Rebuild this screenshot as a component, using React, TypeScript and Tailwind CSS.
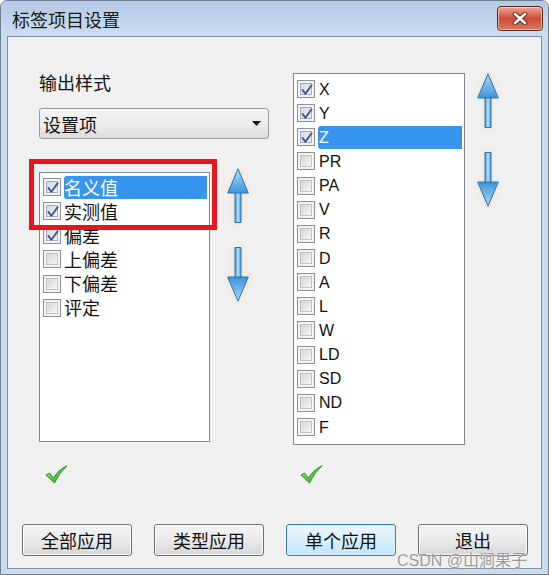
import React from "react";

function Box({ checked }: { checked: boolean }) {
  return (
    <div className="w-[18px] h-[18px] shrink-0 border border-[#8e8f8f] bg-[#f4f4f4] p-[2px]">
      <div
        className={
          checked
            ? "relative w-full h-full border border-[#a6afc0] bg-gradient-to-br from-[#cfd6e6] to-[#f3f5f9]"
            : "relative w-full h-full border border-[#c2c2c2] bg-gradient-to-br from-[#d6d6d6] to-[#f6f6f6]"
        }
      >
        {checked && (
          <svg className="absolute left-[-1px] top-[-1px]" width="14" height="14" viewBox="0 0 14 14">
            <path d="M2.5 7 L5.5 10.8 L11.5 2.2" fill="none" stroke="#44588f" strokeWidth="2" strokeLinecap="round" strokeLinejoin="round" />
          </svg>
        )}
      </div>
    </div>
  );
}

function Arrow({ down }: { down?: boolean }) {
  const id = down ? "gdn" : "gup";
  return (
    <svg
      width="22"
      height="55"
      viewBox="0 0 22 55"
      className="drop-shadow-[0_0_3px_rgba(255,200,140,0.45)]"
      style={down ? { transform: "scaleY(-1)" } : undefined}
    >
      <defs>
        <linearGradient id={id + "h"} x1="0" y1="0" x2="0" y2="1">
          <stop offset="0" stopColor="#a9dcf8" />
          <stop offset="1" stopColor="#3b93dc" />
        </linearGradient>
        <linearGradient id={id + "s"} x1="0" y1="0" x2="1" y2="0">
          <stop offset="0" stopColor="#3e97dd" />
          <stop offset="0.5" stopColor="#b9e2f8" />
          <stop offset="1" stopColor="#3e97dd" />
        </linearGradient>
      </defs>
      <path d="M8 24 L14 24 L14 54.5 L8 54.5 Z" fill={`url(#${id}s)`} stroke="#2a74b4" strokeWidth="1" />
      <path d="M11 0.8 L21.3 25 L0.7 25 Z" fill={`url(#${id}h)`} stroke="#2a74b4" strokeWidth="1" strokeLinejoin="round" />
    </svg>
  );
}

function GreenCheck() {
  return (
    <svg width="23" height="19" viewBox="0 0 23 19">
      <defs>
        <linearGradient id="gck" x1="0" y1="0" x2="1" y2="1">
          <stop offset="0" stopColor="#a8ee72" />
          <stop offset="1" stopColor="#13a01a" />
        </linearGradient>
      </defs>
      <path d="M1 10 L4.5 8 L8.5 13 Q13 5 22 0.8 Q14.5 7.5 9.5 18 Z" fill="url(#gck)" stroke="#1f7a1f" strokeWidth="0.8" strokeLinejoin="round" />
    </svg>
  );
}

function Row({ label, checked, selected, latin }: { label: string; checked: boolean; selected?: boolean; latin?: boolean }) {
  return (
    <div className="h-[24.15px] flex items-center">
      <Box checked={checked} />
      <div
        className={
          selected
            ? "ml-[3px] mr-[2px] flex-1 h-[23px] flex items-center bg-[#3795f0] rounded-l-[3px] text-white"
            : "ml-[3px] flex-1 h-[23px] flex items-center text-[#111]"
        }
      >
        <span
          className={
            latin
              ? "font-['Liberation_Sans','Noto_Sans_CJK_SC',sans-serif] text-[16px] leading-[23px] pl-[1px]"
              : "font-['Noto_Sans_CJK_SC','Noto_Sans',sans-serif] text-[18px] leading-[23px]"
          }
        >
          {label}
        </span>
      </div>
    </div>
  );
}

function Btn({ label, focused }: { label: string; focused?: boolean }) {
  return (
    <div
      className={
        focused
          ? "w-[110px] h-[32px] rounded-[3px] border border-[#3c7fb1] bg-gradient-to-b from-[#eaf6fd] via-[#d9f0fc] to-[#bee6fd] shadow-[inset_0_0_0_1px_#d6eefb] flex items-center justify-center"
          : "w-[110px] h-[32px] rounded-[3px] border border-[#707070] bg-gradient-to-b from-[#f3f3f3] via-[#ebebeb] to-[#d6d6d6] shadow-[inset_0_0_0_1px_#fafafa] flex items-center justify-center"
      }
    >
      <span className="font-['Noto_Sans_CJK_SC','Noto_Sans',sans-serif] text-[18px] leading-[24px] text-[#111]">{label}</span>
    </div>
  );
}

export default function App() {
  const left = [
    { l: "名义值", c: true, s: true },
    { l: "实测值", c: true },
    { l: "偏差", c: true },
    { l: "上偏差", c: false },
    { l: "下偏差", c: false },
    { l: "评定", c: false },
  ];
  const right = [
    { l: "X", c: true },
    { l: "Y", c: true },
    { l: "Z", c: true, s: true },
    { l: "PR", c: false },
    { l: "PA", c: false },
    { l: "V", c: false },
    { l: "R", c: false },
    { l: "D", c: false },
    { l: "A", c: false },
    { l: "L", c: false },
    { l: "W", c: false },
    { l: "LD", c: false },
    { l: "SD", c: false },
    { l: "ND", c: false },
    { l: "F", c: false },
  ];
  return (
    <div className="relative w-[549px] h-[575px] bg-white">
      <div className="w-[549px] h-[575px] border border-[#6c7d90] rounded-t-[7px] bg-[#c9dcef] flex flex-col overflow-hidden">
        {/* title bar */}
        <div className="h-[35px] shrink-0 bg-gradient-to-b from-[#b4cbe5] to-[#cbdcee] flex items-start justify-between pl-[11px] pr-[5px]">
          <span className="mt-[5px] font-['Noto_Sans_CJK_SC','Noto_Sans',sans-serif] text-[18px] leading-[26px] text-[#1a1a1a]">标签项目设置</span>
          <div className="mt-[5px] w-[46px] h-[25px] rounded-[4px] border border-[#5e2a22] bg-gradient-to-b from-[#e9a899] via-[#cf4d36] to-[#d9795f] shadow-[inset_0_0_0_1px_rgba(255,220,210,0.6)] flex items-center justify-center">
            <svg width="16" height="13" viewBox="0 0 16 13">
              <path d="M3 2 L13 11 M13 2 L3 11" stroke="#5a2018" strokeWidth="4.6" strokeLinecap="round" />
              <path d="M3 2 L13 11 M13 2 L3 11" stroke="#ffffff" strokeWidth="2.8" strokeLinecap="round" />
            </svg>
          </div>
        </div>
        {/* client */}
        <div className="mx-[6px] h-[533px] shrink-0 border border-[#7f8fa3] bg-[#f0f0f0] flex flex-col">
          <div className="flex pt-[33px] pl-[31px]">
            {/* left column */}
            <div className="flex flex-col w-[230px]">
              <div className="h-[24px] font-['Noto_Sans_CJK_SC','Noto_Sans',sans-serif] text-[18px] leading-[24px] text-[#111]">输出样式</div>
              <div className="mt-[14px] h-[31px] rounded-[3px] border border-[#9a9a9a] bg-gradient-to-b from-[#f4f4f4] via-[#ececec] to-[#dcdcdc] flex items-center justify-between pl-[3px] pr-[7px]">
                <span className="font-['Noto_Sans_CJK_SC','Noto_Sans',sans-serif] text-[18px] leading-[24px] text-[#111]">设置项</span>
                <svg width="9" height="5" viewBox="0 0 9 5">
                  <path d="M0 0 L9 0 L4.5 5 Z" fill="#111" />
                </svg>
              </div>
              <div className="mt-[33px] flex">
                <div className="relative w-[171px] h-[270px] border border-[#828790] bg-white pt-[2px] pl-[3px]">
                  {left.map((r) => (
                    <Row key={r.l} label={r.l} checked={r.c} selected={r.s} />
                  ))}
                  <div className="absolute left-[-11px] top-[-14px] w-[188px] h-[71px] border-[5px] border-[#e5161e]" />
                </div>
                <div className="ml-[17px] flex flex-col">
                  <div className="mt-[-4px]">
                    <Arrow />
                  </div>
                  <div className="mt-[24px]">
                    <Arrow down />
                  </div>
                </div>
              </div>
              <div className="mt-[23px] ml-[6px]">
                <GreenCheck />
              </div>
            </div>
            {/* right column */}
            <div className="ml-[24px] mt-[3px] flex flex-col">
              <div className="flex">
                <div className="w-[172px] h-[372px] border border-[#828790] bg-white pt-[3px] pl-[3px]">
                  {right.map((r) => (
                    <Row key={r.l} label={r.l} checked={r.c} selected={r.s} latin />
                  ))}
                </div>
                <div className="ml-[12px] flex flex-col">
                  <Arrow />
                  <div className="mt-[24px]">
                    <Arrow down />
                  </div>
                </div>
              </div>
              <div className="mt-[20px] ml-[7px]">
                <GreenCheck />
              </div>
            </div>
          </div>
          <div className="mt-auto pb-[12px] pl-[14px] flex gap-[22px]">
            <Btn label="全部应用" />
            <Btn label="类型应用" />
            <Btn label="单个应用" focused />
            <Btn label="退出" />
          </div>
        </div>
      </div>
      <div className="absolute left-[397px] top-[550px] font-['Liberation_Sans','Noto_Sans_CJK_SC',sans-serif] text-[16px] leading-[22px] text-[#9a9a9a] [text-shadow:0_0_2px_#ffffff]">
        CSDN @山涧果子
      </div>
    </div>
  );
}
